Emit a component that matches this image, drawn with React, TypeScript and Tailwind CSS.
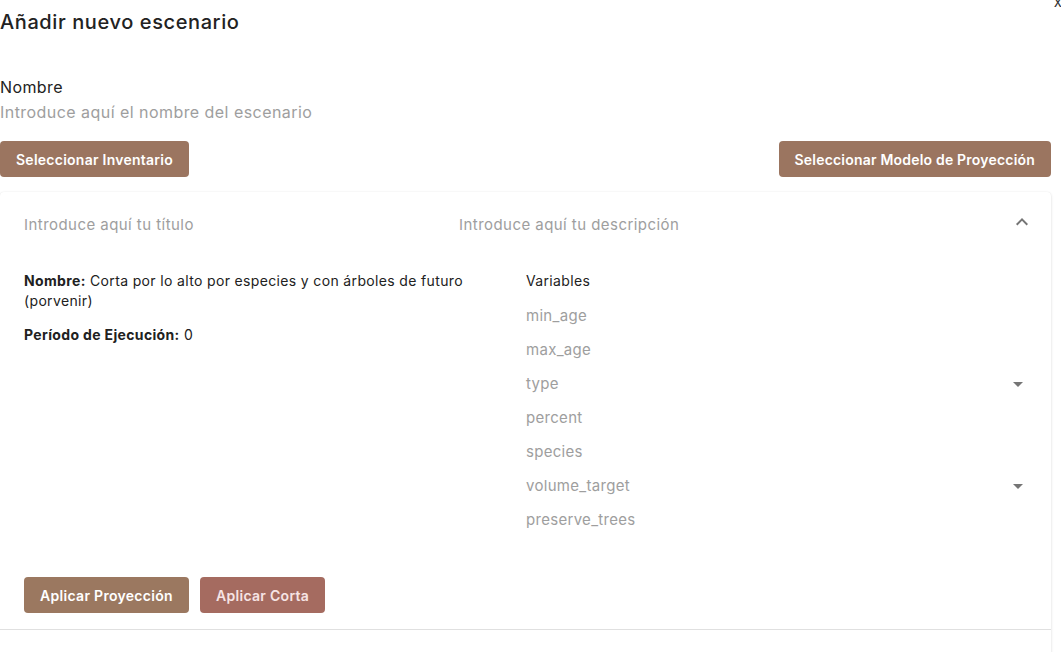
import React from 'react';

const VARIABLES = [
  { name: 'min_age' },
  { name: 'max_age' },
  { name: 'type', select: true },
  { name: 'percent' },
  { name: 'species' },
  { name: 'volume_target', select: true },
  { name: 'preserve_trees' },
];

function ArrowDropDown() {
  return (
    <svg viewBox="0 0 24 24" className="w-6 h-6 fill-[#757575]">
      <path d="M7 10l5 5 5-5z" />
    </svg>
  );
}

function ExpandLess() {
  return (
    <svg viewBox="0 0 24 24" className="w-6 h-6 fill-[#757575]">
      <path d="M12 8l-6 6 1.41 1.41L12 10.83l4.59 4.58L18 14z" />
    </svg>
  );
}

export default function App() {
  return (
    <div className="relative w-[1061px] h-[652px] overflow-hidden bg-white text-[#212121] font-['Inter',sans-serif]">
      <button className="absolute right-[-1px] top-[-8px] text-[15px] leading-5 text-[#333]">x</button>

      <div className="w-[1051px]">
        <h2 className="pt-2 text-[20px] leading-7 font-medium tracking-[0.6px] text-[#222]">Añadir nuevo escenario</h2>

        <div className="mt-[39px]">
          <label className="block text-[16px] leading-6 tracking-[0.4px] text-[#222]">Nombre</label>
          <input
            placeholder="Introduce aquí el nombre del escenario"
            className="block w-full mt-px text-[16px] leading-6 tracking-[0.45px] placeholder:text-[#9e9e9e] focus:outline-none"
          />
        </div>

        <div className="flex items-center justify-between mt-[17px]">
          <button className="h-9 px-4 bg-[#9b7560] text-white text-[14px] font-semibold tracking-[0.25px] rounded">Seleccionar Inventario</button>
          <button className="h-9 px-4 bg-[#9b7560] text-white text-[14px] font-semibold tracking-[0.2px] rounded">Seleccionar Modelo de Proyección</button>
        </div>

        <div className="mt-[15px] h-[500px] bg-white rounded-t shadow-[0_1px_3px_rgba(0,0,0,0.14),0_0_1px_rgba(0,0,0,0.08)]">
          <div className="flex items-center h-16 pl-6 pr-[17px] pt-px">
            <input
              placeholder="Introduce aquí tu título"
              className="w-[411px] text-[15px] leading-6 tracking-[0.45px] placeholder:text-[#9e9e9e] focus:outline-none"
            />
            <input
              placeholder="Introduce aquí tu descripción"
              className="ml-6 flex-1 text-[15px] leading-6 tracking-[0.45px] placeholder:text-[#9e9e9e] focus:outline-none"
            />
            <span className="-mt-1.5"><ExpandLess /></span>
          </div>

          <div className="pl-6 pr-[21px] pt-[7px] pb-4 border-b border-[#e0e0e0]">
            <div className="grid grid-cols-[478px_1fr] gap-6">
              <div className="pt-2 text-[14px] leading-5 tracking-[0.35px]">
                <p><span className="font-bold">Nombre:</span> Corta por lo alto por especies y con árboles de futuro (porvenir)</p>
                <p className="mt-[14px]"><span className="font-bold">Período de Ejecución:</span> 0</p>
              </div>
              <div className="text-[14px]">
                <div className="h-[34px] flex items-center tracking-[0.35px] text-[#222]">Variables</div>
                {VARIABLES.map(v => (
                  <div key={v.name} className="h-[34px] pt-1 flex items-center justify-between text-[15px] tracking-[0.3px] text-[#9e9e9e]">
                    <span>{v.name}</span>
                    {v.select && <ArrowDropDown />}
                  </div>
                ))}
              </div>
            </div>

            <div className="flex gap-[11px] mt-[42px]">
              <button className="h-9 px-4 bg-[#9b7860] text-white text-[14px] font-semibold tracking-[0.3px] rounded">Aplicar Proyección</button>
              <button className="h-9 px-4 bg-[#a56b60] text-[#f6e4e4] text-[14px] font-semibold tracking-[0.3px] rounded">Aplicar Corta</button>
            </div>
          </div>
        </div>
      </div>
    </div>
  );
}
